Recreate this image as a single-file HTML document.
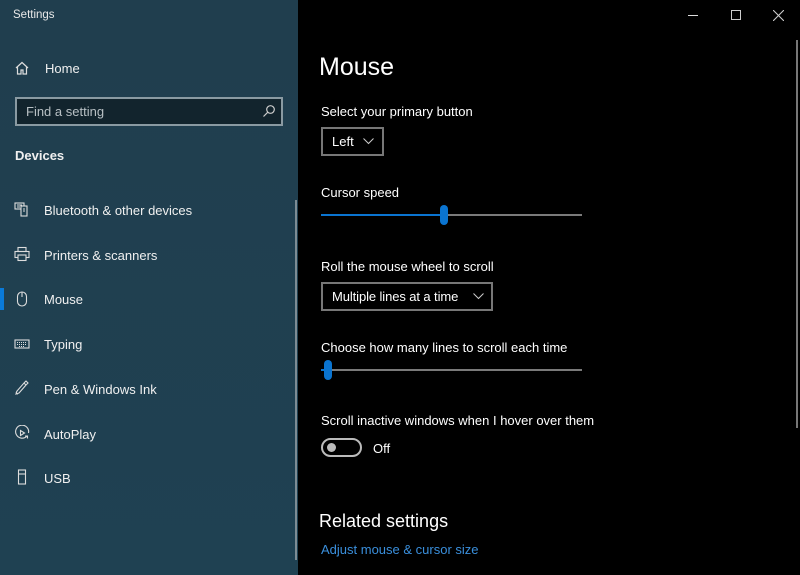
<!DOCTYPE html>
<html><head><style>
*{margin:0;padding:0;box-sizing:border-box}
body{width:800px;height:575px;overflow:hidden;background:#000;font-family:"Liberation Sans",sans-serif;position:relative;color:#fff}
.side{position:absolute;left:0;top:0;width:298px;height:575px;background:linear-gradient(180deg,#203e4e,#1f4152)}
.a{position:absolute;white-space:nowrap}
.nav{position:absolute;left:44px;font-size:13px;color:#f0f0f0}
.ic{position:absolute;left:14px;width:16px;height:16px}
.lbl{font-size:13px;color:#fff}
</style></head><body>
<div class="side">
  <div class="a" style="left:13px;top:9px;font-size:11.5px;color:#e8e8e8">Settings</div>
  <svg class="ic" style="top:60px" viewBox="0 0 16 16" fill="none" stroke="#ddd" stroke-width="1.2"><path d="M2 8L8 2.5 14 8M3.5 6.8V14h3.5V10h2v4h3.5V6.8"/></svg>
  <div class="nav" style="top:61px;left:45px">Home</div>
  <div class="a" style="left:15px;top:97px;width:268px;height:29px;border:2px solid #8a9aa2;background:#12242d"></div>
  <div class="a" style="left:26px;top:104px;font-size:13px;color:#b8c0c4">Find a setting</div>
  <svg class="a" style="left:262px;top:104px;width:14px;height:14px" viewBox="0 0 14 14" fill="none" stroke="#ccc" stroke-width="1.2"><circle cx="8.5" cy="5.5" r="3.8"/><path d="M5.7 8.3L1.5 12.5"/></svg>
  <div class="a" style="left:15px;top:148px;font-size:13px;font-weight:bold;color:#f0f0f0">Devices</div>

  <svg class="ic" style="top:201px" viewBox="0 0 16 16" fill="none" stroke="#ddd" stroke-width="1.1"><rect x="1" y="2" width="9" height="6"/><rect x="7" y="5" width="6" height="10" fill="#1f4050"/><path d="M3 4h5M3 6h3M9 8h2M9 10h2"/></svg>
  <div class="nav" style="top:203px">Bluetooth &amp; other devices</div>
  <svg class="ic" style="top:246px" viewBox="0 0 16 16" fill="none" stroke="#ddd" stroke-width="1.1"><rect x="4" y="1.5" width="8" height="4"/><rect x="1" y="5.5" width="14" height="6"/><rect x="4" y="9" width="8" height="5.5" fill="#1f4050"/></svg>
  <div class="nav" style="top:248px">Printers &amp; scanners</div>
  <div class="a" style="left:0;top:288px;width:4px;height:22px;background:#0a7ad8"></div>
  <svg class="ic" style="top:291px" viewBox="0 0 16 16" fill="none" stroke="#ddd" stroke-width="1.1"><rect x="3.5" y="1" width="9" height="14" rx="4.5"/><path d="M8 1v5"/></svg>
  <div class="nav" style="top:292px">Mouse</div>
  <svg class="ic" style="top:336px" viewBox="0 0 16 16" fill="none" stroke="#ddd" stroke-width="1.1"><rect x="1" y="4" width="14" height="8"/><path d="M3 6.5h10M3 8.5h10M5 10.5h6" stroke-dasharray="1 1"/></svg>
  <div class="nav" style="top:337px">Typing</div>
  <svg class="ic" style="top:380px" viewBox="0 0 16 16" fill="none" stroke="#ddd" stroke-width="1.1"><path d="M2 14l1-3 7-8 2 2-7 8zM10 3l2-2 2 2-2 2M3 11q-2 3 1 3"/></svg>
  <div class="nav" style="top:382px">Pen &amp; Windows Ink</div>
  <svg class="ic" style="top:425px" viewBox="0 0 16 16" fill="none" stroke="#ddd" stroke-width="1.1"><path d="M13 11A6.5 6.5 0 1 1 14.5 8"/><path d="M6.5 5.5v5l4-2.5z"/><path d="M11 11h2.5v2.5"/></svg>
  <div class="nav" style="top:427px">AutoPlay</div>
  <svg class="ic" style="top:469px" viewBox="0 0 16 16" fill="none" stroke="#ddd" stroke-width="1.1"><rect x="4.5" y="1" width="7" height="14"/><path d="M4.5 5h7"/></svg>
  <div class="nav" style="top:471px">USB</div>
  <div class="a" style="left:295px;top:200px;width:2px;height:360px;background:#7d8c94"></div>
</div>
<div class="a" style="left:688px;top:15px;width:10px;height:1px;background:#ddd"></div>
<div class="a" style="left:731px;top:10px;width:10px;height:10px;border:1px solid #ccc"></div>
<svg class="a" style="left:773px;top:10px;width:11px;height:11px" viewBox="0 0 11 11" stroke="#ccc" stroke-width="1.1"><path d="M0 0L11 11M11 0L0 11"/></svg>
<div class="a" style="left:796px;top:40px;width:2px;height:388px;background:#777"></div>

<div class="a" style="left:319px;top:53px;font-size:25px;color:#fff">Mouse</div>
<div class="a lbl" style="left:321px;top:104px">Select your primary button</div>
<div class="a" style="left:321px;top:127px;width:63px;height:29px;border:2px solid #777"></div>
<div class="a lbl" style="left:332px;top:134px">Left</div>
<svg class="a" style="left:363px;top:138px;width:11px;height:7px" viewBox="0 0 11 7" fill="none" stroke="#ccc"><path d="M0.5 0.5l5 5 5-5"/></svg>
<div class="a lbl" style="left:321px;top:185px">Cursor speed</div>
<div class="a" style="left:321px;top:214px;width:124px;height:2px;background:#0a74d0"></div>
<div class="a" style="left:445px;top:214px;width:137px;height:2px;background:#7a7a7a"></div>
<div class="a" style="left:440px;top:205px;width:8px;height:20px;border-radius:4px;background:#0a74d0"></div>
<div class="a lbl" style="left:321px;top:259px">Roll the mouse wheel to scroll</div>
<div class="a" style="left:321px;top:282px;width:172px;height:29px;border:2px solid #777"></div>
<div class="a lbl" style="left:332px;top:289px;letter-spacing:-0.1px">Multiple lines at a time</div>
<svg class="a" style="left:473px;top:293px;width:11px;height:7px" viewBox="0 0 11 7" fill="none" stroke="#ccc"><path d="M0.5 0.5l5 5 5-5"/></svg>
<div class="a lbl" style="left:321px;top:340px">Choose how many lines to scroll each time</div>
<div class="a" style="left:321px;top:369px;width:6px;height:2px;background:#0a74d0"></div>
<div class="a" style="left:327px;top:369px;width:255px;height:2px;background:#7a7a7a"></div>
<div class="a" style="left:324px;top:360px;width:8px;height:20px;border-radius:4px;background:#0a74d0"></div>
<div class="a lbl" style="left:321px;top:413px">Scroll inactive windows when I hover over them</div>
<div class="a" style="left:321px;top:438px;width:41px;height:19px;border:2px solid #bbb;border-radius:10px"></div>
<div class="a" style="left:327px;top:443px;width:9px;height:9px;border-radius:50%;background:#bbb"></div>
<div class="a lbl" style="left:373px;top:441px">Off</div>
<div class="a" style="left:319px;top:511px;font-size:18px;color:#fff">Related settings</div>
<div class="a" style="left:321px;top:542px;font-size:13px;color:#3a8fdc">Adjust mouse &amp; cursor size</div>
</body></html>
